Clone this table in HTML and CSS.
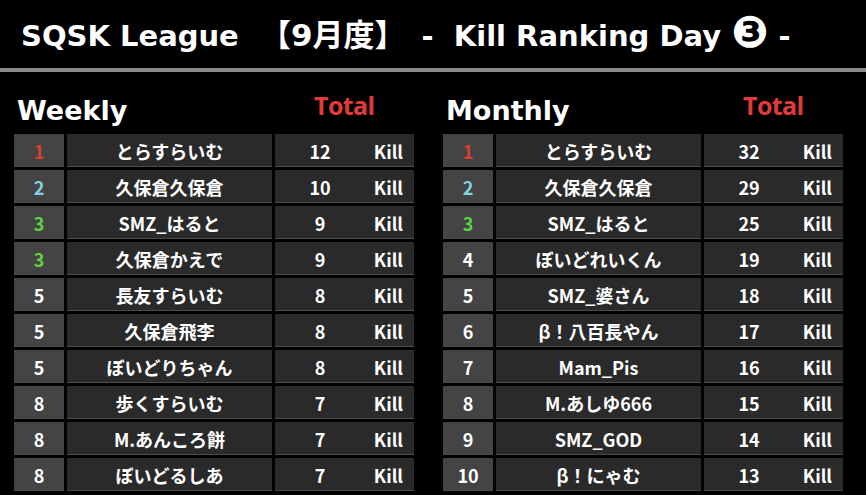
FILE: index.html
```html
<!DOCTYPE html>
<html lang="ja">
<head>
<meta charset="utf-8">
<title>SQSK League Kill Ranking</title>
<link rel="stylesheet" href="styles.css">
</head>
<body>
<header class="top">
  <h1 class="title">SQSK League <span class="month">【9月度】</span> <span class="dash">-</span> Kill Ranking Day <span class="circ">❸</span> -</h1>
</header>
<div class="rule"></div>
<main class="boards">
  <section class="board">
    <div class="board-head">
      <h2 class="board-name">Weekly</h2>
      <span class="total">Total</span>
    </div>
    <div class="rows">
      <div class="row"><div class="rank r1">1</div><div class="name">とらすらいむ</div><div class="score"><span class="num">12</span><span class="unit">Kill</span></div></div>
      <div class="row"><div class="rank r2">2</div><div class="name">久保倉久保倉</div><div class="score"><span class="num">10</span><span class="unit">Kill</span></div></div>
      <div class="row"><div class="rank r3">3</div><div class="name">SMZ_はると</div><div class="score"><span class="num">9</span><span class="unit">Kill</span></div></div>
      <div class="row"><div class="rank r3">3</div><div class="name">久保倉かえで</div><div class="score"><span class="num">9</span><span class="unit">Kill</span></div></div>
      <div class="row"><div class="rank">5</div><div class="name">長友すらいむ</div><div class="score"><span class="num">8</span><span class="unit">Kill</span></div></div>
      <div class="row"><div class="rank">5</div><div class="name">久保倉飛李</div><div class="score"><span class="num">8</span><span class="unit">Kill</span></div></div>
      <div class="row"><div class="rank">5</div><div class="name">ぼいどりちゃん</div><div class="score"><span class="num">8</span><span class="unit">Kill</span></div></div>
      <div class="row"><div class="rank">8</div><div class="name">歩くすらいむ</div><div class="score"><span class="num">7</span><span class="unit">Kill</span></div></div>
      <div class="row"><div class="rank">8</div><div class="name">M.あんころ餅</div><div class="score"><span class="num">7</span><span class="unit">Kill</span></div></div>
      <div class="row"><div class="rank">8</div><div class="name">ぼいどるしあ</div><div class="score"><span class="num">7</span><span class="unit">Kill</span></div></div>
    </div>
  </section>
  <section class="board">
    <div class="board-head">
      <h2 class="board-name">Monthly</h2>
      <span class="total">Total</span>
    </div>
    <div class="rows">
      <div class="row"><div class="rank r1">1</div><div class="name">とらすらいむ</div><div class="score"><span class="num">32</span><span class="unit">Kill</span></div></div>
      <div class="row"><div class="rank r2">2</div><div class="name">久保倉久保倉</div><div class="score"><span class="num">29</span><span class="unit">Kill</span></div></div>
      <div class="row"><div class="rank r3">3</div><div class="name">SMZ_はると</div><div class="score"><span class="num">25</span><span class="unit">Kill</span></div></div>
      <div class="row"><div class="rank">4</div><div class="name">ぼいどれいくん</div><div class="score"><span class="num">19</span><span class="unit">Kill</span></div></div>
      <div class="row"><div class="rank">5</div><div class="name">SMZ_婆さん</div><div class="score"><span class="num">18</span><span class="unit">Kill</span></div></div>
      <div class="row"><div class="rank">6</div><div class="name">β！八百長やん</div><div class="score"><span class="num">17</span><span class="unit">Kill</span></div></div>
      <div class="row"><div class="rank">7</div><div class="name">Mam_Pis</div><div class="score"><span class="num">16</span><span class="unit">Kill</span></div></div>
      <div class="row"><div class="rank">8</div><div class="name">M.あしゆ666</div><div class="score"><span class="num">15</span><span class="unit">Kill</span></div></div>
      <div class="row"><div class="rank">9</div><div class="name">SMZ_GOD</div><div class="score"><span class="num">14</span><span class="unit">Kill</span></div></div>
      <div class="row"><div class="rank">10</div><div class="name">β！にゃむ</div><div class="score"><span class="num">13</span><span class="unit">Kill</span></div></div>
    </div>
  </section>
</main>
</body>
</html>
```
FILE: styles.css
```css
html, body {
  margin: 0;
  padding: 0;
  background: #000;
  color: #fff;
  font-family: "Noto Sans CJK JP", "Open Sans", sans-serif;
}

.top {
  height: 68px;
  display: flex;
  align-items: center;
  padding-left: 21px;
}

.title {
  margin: 0;
  font-family: "DejaVu Sans", "Noto Sans CJK JP", sans-serif;
  font-size: 29px;
  font-weight: 700;
  line-height: 1;
  padding-top: 2px;
  white-space: nowrap;
}

.month {
  font-size: 31px;
  margin-left: 11px;
  margin-right: 6px;
}

.dash {
  margin-right: 10px;
}

.circ {
  display: inline-block;
  font-family: "DejaVu Sans", sans-serif;
  font-size: 44px;
  line-height: 0;
  vertical-align: -1px;
}

.rule {
  height: 4px;
  background: #8a8a8a;
}

.boards {
  display: flex;
  gap: 29px;
  padding-left: 14px;
}

.board {
  width: 400px;
}

.board-head {
  height: 62px;
  display: flex;
  align-items: flex-end;
}

.board-name {
  margin: 0;
  font-family: "DejaVu Sans", sans-serif;
  font-size: 27px;
  font-weight: 700;
  line-height: 1;
  padding-left: 3px;
  padding-bottom: 10px;
  width: 297px;
}

.total {
  font-family: "Open Sans", sans-serif;
  color: #e03b3b;
  font-size: 25px;
  font-weight: 700;
  letter-spacing: -0.6px;
  line-height: 1;
  padding-bottom: 16px;
}

.rows {
  display: flex;
  flex-direction: column;
  gap: 3px;
}

.row {
  display: grid;
  grid-template-columns: 50px 205px 139px;
  gap: 3px;
  height: 33px;
  font-size: 18px;
  font-weight: 700;
  line-height: 1;
}

.row > div {
  display: flex;
  align-items: center;
  box-shadow: inset 0 -1px 0 #4a4a4a;
}

.rank {
  background: #444444;
  justify-content: center;
}

.r1 { color: #d6412f; }
.r2 { color: #7fd4e2; }
.r3 { color: #5fd243; }

.name {
  background: #2a2a2a;
  justify-content: center;
}

.score {
  background: #2a2a2a;
}

.num {
  width: 90px;
  text-align: center;
}

.unit {
  flex: 1;
  text-align: right;
  padding-right: 11px;
}
```
